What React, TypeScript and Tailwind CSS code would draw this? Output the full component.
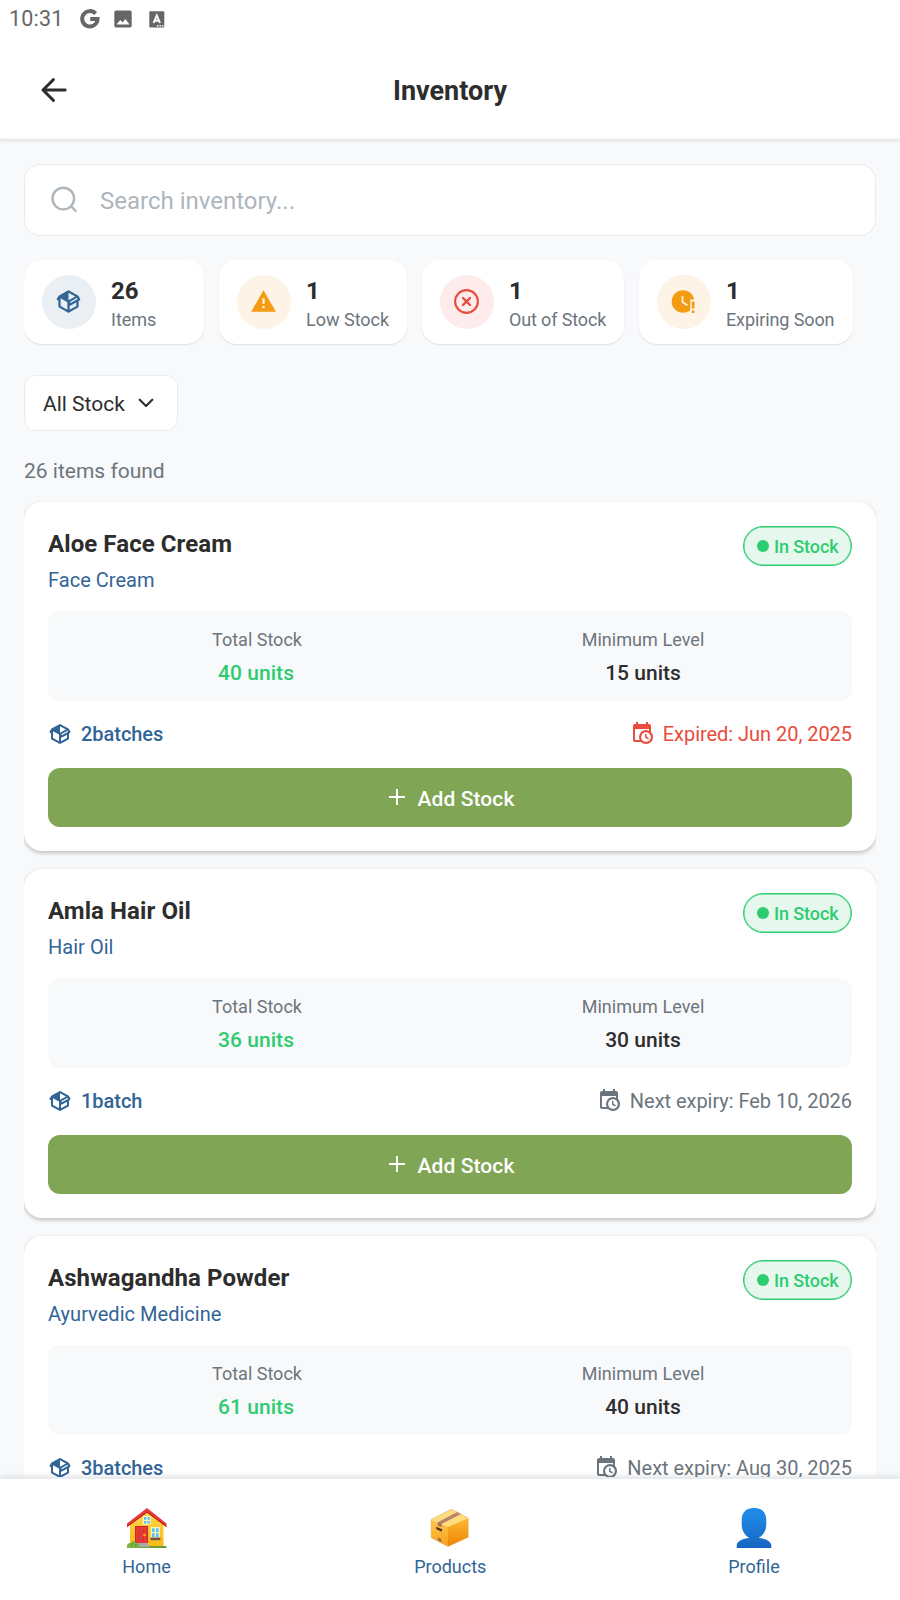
import type { ReactNode } from "react";

function Mdi({ d, className }: { d: string; className: string }) {
  return (
    <svg viewBox="0 0 24 24" fill="currentColor" fillRule="evenodd" className={className}>
      <path d={d} />
    </svg>
  );
}

const PACKAGE =
  "M2,10.96C1.5,10.68 1.35,10.07 1.63,9.59L3.13,7C3.24,6.8 3.41,6.66 3.6,6.58L11.43,2.18C11.59,2.06 11.79,2 12,2C12.21,2 12.41,2.06 12.57,2.18L20.47,6.62C20.66,6.72 20.82,6.88 20.91,7.08L22.36,9.6C22.64,10.08 22.47,10.69 22,10.96L21,11.54V16.5C21,16.88 20.79,17.21 20.47,17.38L12.57,21.82C12.41,21.94 12.21,22 12,22C11.79,22 11.59,21.94 11.43,21.82L3.53,17.38C3.21,17.21 3,16.88 3,16.5V10.96C2.7,11.13 2.32,11.14 2,10.96M12,4.15V10.85L17.96,7.5L12,4.15M5,15.91L11,19.29V12.58L5,9.21V15.91M19,15.91V12.69L14,15.59C13.67,15.77 13.3,15.76 13,15.6V19.29L19,15.91M13.85,13.36L20.13,9.73L19.55,8.72L13.27,12.35L13.85,13.36";
const ALERT = "M13 14H11V9H13M13 18H11V16H13M1 21H23L12 2L1 21Z";
const CALENDAR =
  "M15,13H16.5V15.82L18.94,17.23L18.19,18.53L15,16.69V13M19,8H5V19H9.67C9.24,18.09 9,17.07 9,16A7,7 0 0,1 16,9C17.07,9 18.09,9.24 19,9.67V8M5,21C3.89,21 3,20.1 3,19V5C3,3.89 3.89,3 5,3H6V1H8V3H16V1H18V3H19A2,2 0 0,1 21,5V11.1C22.24,12.36 23,14.09 23,16A7,7 0 0,1 16,23C14.09,23 12.36,22.24 11.1,21H5M16,11.15A4.85,4.85 0 0,0 11.15,16C11.15,18.68 13.32,20.85 16,20.85A4.85,4.85 0 0,0 20.85,16C20.85,13.32 18.68,11.15 16,11.15Z";

function StatusBar() {
  return (
    <div className="flex h-[38px] items-center pl-[9px] text-[#666666]">
      <span className="w-[71px] text-[21.5px] tracking-[0.2px]">10:31</span>
      <svg viewBox="0 0 20 20" className="size-5 shrink-0" fill="none" stroke="currentColor" strokeWidth="3.9">
        <path d="M15.6 4.6A7.7 7.7 0 1 0 17.6 10H10.2" />
      </svg>
      <svg viewBox="0 0 18 18" className="ml-[14px] h-[18px] w-[18px] shrink-0" fill="currentColor" fillRule="evenodd">
        <path d="M2 0.5H16A1.7 1.7 0 0 1 17.7 2.2V15.8A1.7 1.7 0 0 1 16 17.5H2A1.7 1.7 0 0 1 .3 15.8V2.2A1.7 1.7 0 0 1 2 .5ZM2.5 14.5H15.5L11.4 9L8.6 12.6L6.3 10Z" />
      </svg>
      <svg viewBox="0 0 16 17" className="ml-[16.5px] h-[17px] w-4 shrink-0">
        <rect x="0.3" y="0.3" width="15" height="16.2" rx="1" fill="currentColor" />
        <path d="M4.6 12L7.8 4.4L11 12M5.8 9.8H9.8" stroke="white" strokeWidth="1.9" fill="none" />
        <path d="M8 14.7H9.5M10.5 14.7H12M13 14.7H14.4" stroke="white" strokeWidth="1.4" />
      </svg>
    </div>
  );
}

function Header() {
  return (
    <header className="relative z-10 h-[140px] shrink-0 border-b-2 border-[#eff1f3] bg-white shadow-[0_1px_2px_rgba(0,0,0,0.12)]">
      <StatusBar />
      <div className="grid h-[100px] grid-cols-[100px_1fr_100px] items-center pt-[4px]">
        <svg viewBox="0 0 26 24" className="ml-[41px] h-6 w-[26px]" fill="none" stroke="#2d2d2d" strokeWidth="2.9" strokeLinecap="round" strokeLinejoin="round">
          <path d="M12.4 1.6L2 12L12.4 22.4M2.5 12H24.2" />
        </svg>
        <h1 className="pt-[2px] text-center text-[27px] font-bold leading-none text-[#2d2d2d]">Inventory</h1>
      </div>
    </header>
  );
}

function Stat({ value, label, tint, size, children }: { value: string; label: string; tint: string; size: string; children: ReactNode }) {
  return (
    <div className={`flex h-[84px] shrink-0 items-center gap-[15px] rounded-[18px] bg-white pl-[18px] shadow-[0_1px_1.5px_rgba(0,0,0,0.1)] ${size}`}>
      <div className={`flex size-[54px] shrink-0 items-center justify-center rounded-full pr-px pb-px ${tint}`}>{children}</div>
      <div className="pt-[7px]">
        <div className="text-[24px] font-bold leading-[29px] text-[#2d2d2d]">{value}</div>
        <div className="whitespace-nowrap text-[18px] leading-[28px] text-[#6c757d]">{label}</div>
      </div>
    </div>
  );
}

interface Product {
  name: string;
  category: string;
  total: string;
  minimum: string;
  batches: string;
  expiry: string;
  expired?: boolean;
}

const products: Product[] = [
  { name: "Aloe Face Cream", category: "Face Cream", total: "40 units", minimum: "15 units", batches: "2batches", expiry: "Expired: Jun 20, 2025", expired: true },
  { name: "Amla Hair Oil", category: "Hair Oil", total: "36 units", minimum: "30 units", batches: "1batch", expiry: "Next expiry: Feb 10, 2026" },
  { name: "Ashwagandha Powder", category: "Ayurvedic Medicine", total: "61 units", minimum: "40 units", batches: "3batches", expiry: "Next expiry: Aug 30, 2025" },
];

function ProductCard({ p }: { p: Product }) {
  return (
    <article className="h-[349px] shrink-0 rounded-[18px] bg-white px-6 pt-6 shadow-[0_2px_4px_rgba(0,0,0,0.24)]">
      <div className="flex h-[85px] items-start justify-between">
        <div>
          <h2 className="text-[24px] font-bold leading-[36px] tracking-[0.08px] text-[#2d2d2d]">{p.name}</h2>
          <p className="text-[20px] leading-[36px] tracking-[0.03px] text-[#326496]">{p.category}</p>
        </div>
        <div className="flex h-10 w-[109px] items-center gap-[5px] rounded-[20px] border border-[#2ecc71] bg-[#e6f8ed] pl-[13px] text-[18px] font-medium tracking-[-0.1px] text-[#2ecc71] shadow-[inset_0_0_0_0.5px_#2ecc71]">
          <span className="size-3 shrink-0 rounded-full bg-[#2ecc71]" />
          <span className="whitespace-nowrap">In Stock</span>
        </div>
      </div>
      <div className="grid h-[90px] grid-cols-2 rounded-[12px] bg-[#f8f9fb] px-[16px] pt-[12px] text-center">
        <div>
          <div className="text-[18px] leading-[33px] text-[#6c757d]">Total Stock</div>
          <div className="pt-px pr-[2px] text-[21px] font-medium leading-[33px] tracking-[0.05px] text-[#2ecc71]">{p.total}</div>
        </div>
        <div>
          <div className="text-[18px] leading-[33px] tracking-[0.05px] text-[#6c757d]">Minimum Level</div>
          <div className="pt-px text-[21px] font-medium leading-[33px] text-[#2d2d2d]">{p.minimum}</div>
        </div>
      </div>
      <div className="flex h-[67px] items-center justify-between pb-[2px] text-[20px]">
        <div className="flex items-center gap-[9px] font-medium text-[#326496]">
          <Mdi d={PACKAGE} className="size-6" />
          <span className="tracking-[-0.04px]">{p.batches}</span>
        </div>
        <div className={`flex items-center gap-[9px] ${p.expired ? "text-[#e74c3c]" : "text-[#6c757d]"}`}>
          <Mdi d={CALENDAR} className="mb-px size-6" />
          <span className="tracking-[-0.04px]">{p.expiry}</span>
        </div>
      </div>
      <button className="flex h-[59px] w-full items-center justify-center gap-[8px] rounded-[12px] bg-[#80a554] text-[21px] font-medium text-white">
        <Mdi d="M20 13H13V20H11V13H4V11H11V4H13V11H20Z" className="mb-[2px] size-6" />
        <span className="pt-[4px] tracking-[0.1px]">Add Stock</span>
      </button>
    </article>
  );
}

function HomeIcon() {
  return (
    <svg viewBox="0 0 42 42" className="size-[42px]">
      <defs>
        <linearGradient id="wall" x2="0" y2="1">
          <stop stopColor="#ffd84a" />
          <stop offset="1" stopColor="#fbb916" />
        </linearGradient>
      </defs>
      <path d="M4 17L21 3L37.5 17V40H4Z" fill="url(#wall)" />
      <path d="M1 39H40.5V41H1Z" fill="#689f38" />
      <path d="M21 1L1 16.5V20.2L21 5.4L40.5 20.2V16.5Z" fill="#e53935" />
      <path d="M1.2 19.5L21 5.2L40.3 19.5" stroke="#b71c1c" strokeWidth="1" fill="none" />
      <rect x="16.8" y="9" width="8" height="8.5" fill="#fff3c4" />
      <path d="M18 10H20.3V12.7H18ZM21.5 10H23.8V12.7H21.5ZM18 14H20.3V16.5H18ZM21.5 14H23.8V16.5H21.5Z" fill="#4fc3f7" />
      <rect x="9" y="19" width="13" height="17" fill="#c62828" />
      <rect x="10" y="20" width="11" height="16" fill="#e53935" />
      <path d="M13 22V34M17.5 22V34" stroke="#d32f2f" strokeWidth=".8" />
      <circle cx="18.5" cy="28" r="1.3" fill="#ffb300" />
      <path d="M9 36H21L24 40H9Z" fill="#aaa" />
      <rect x="24.8" y="20" width="9" height="11" fill="#fff3c4" />
      <path d="M26 21.2H28.6V25H26ZM30 21.2H32.6V25H30ZM26 26.2H28.6V30H26ZM30 26.2H32.6V30H30Z" fill="#4fc3f7" />
      <rect x="24.5" y="30.5" width="9.8" height="2.7" fill="#795548" />
      <path d="M1 40.5C.3 37 3 35.8 5 36C5.5 33.5 9.5 33.7 10 36C13 36 14 38.5 13 41H1Z" fill="#7cb342" />
      <path d="M5 38L7 36.5M9 38.5L11 37.5" stroke="#558b2f" />
    </svg>
  );
}

function BoxIcon() {
  return (
    <svg viewBox="0 0 42 42" className="size-[42px]">
      <defs>
        <linearGradient id="boxside" x2="0" y2="1">
          <stop stopColor="#fdb934" />
          <stop offset="1" stopColor="#ef8400" />
        </linearGradient>
        <linearGradient id="boxfront" x2="0" y2="1">
          <stop stopColor="#ffc74b" />
          <stop offset="1" stopColor="#f9a01e" />
        </linearGradient>
      </defs>
      <path d="M2.2 12.4L19 19.3V39.5L2.2 30.7Z" fill="url(#boxfront)" />
      <path d="M19 19.3L39.2 11V30.2L19 39.5Z" fill="url(#boxside)" />
      <path d="M2.2 12.4L22.6 2.2L39.2 11L19 20Z" fill="#ffdc7c" />
      <path d="M8.8 15.2L28.3 5.1L32 7.1L12.5 16.9V20L8.8 18.3Z" fill="#b9836c" />
      <path d="M8.8 15.4L12.5 17V20L8.8 18.3Z" fill="#a1745a" />
      <path d="M7.3 19.8L13 22.2V24.8L7.3 22.3Z" fill="#50342b" />
      <path d="M8.8 30.2L12.3 31.9V35.3L8.8 33.5Z" fill="#a57346" />
      <path d="M2.2 12.4L22.6 2.2L39.2 11V30.2L19 39.5L2.2 30.7Z" stroke="#d9a050" strokeWidth=".5" fill="none" />
    </svg>
  );
}

function ProfileIcon() {
  return (
    <svg viewBox="0 0 42 42" className="size-[42px]">
      <defs>
        <linearGradient id="person" x2="0" y2="1">
          <stop offset=".2" stopColor="#1e88e5" />
          <stop offset="1" stopColor="#1565c0" />
        </linearGradient>
      </defs>
      <path d="M21 1C29 1 33.3 5.3 33.3 13.5V17.5C33.3 23.7 30 28.6 25.6 31C32.7 31.6 38.3 34.4 38.3 38.5V41H3.7V38.5C3.7 34.4 9.3 31.6 16.4 31C12 28.6 8.7 23.7 8.7 17.5V13.5C8.7 5.3 13 1 21 1Z" fill="url(#person)" />
    </svg>
  );
}

function Tab({ label, children }: { label: string; children: ReactNode }) {
  return (
    <div className="flex w-24 flex-col items-center pt-[28px] text-[18px] leading-[22px] text-[#326496]">
      {children}
      <span className="mt-[7px]">{label}</span>
    </div>
  );
}

export default function App() {
  return (
    <div className="flex h-[1600px] w-[900px] flex-col overflow-hidden bg-[#f8f9fb] font-[Roboto,sans-serif] antialiased">
      <Header />
      <main className="flex min-h-0 flex-1 flex-col overflow-hidden px-6 pt-6">
        <div className="flex h-[72px] shrink-0 items-center rounded-[16px] border-[1.5px] border-[#e9ecef] bg-white pl-[26px]">
          <svg viewBox="0 0 28 28" className="size-7 shrink-0" fill="none" stroke="#adb5bd" strokeWidth="2.4" strokeLinecap="round">
            <circle cx="12.3" cy="12.6" r="10.8" />
            <path d="M20.1 20.4L24.7 25" />
          </svg>
          <span className="ml-[21px] pt-[2px] text-[24px] text-[#adb5bd]">Search inventory...</span>
        </div>
        <div className="mt-[23.5px] mb-[-3.5px] flex shrink-0 gap-[15px] overflow-x-clip pb-1">
          <Stat value="26" label="Items" tint="bg-[#eaeff4]" size="w-[180px]">
            <Mdi d={PACKAGE} className="size-[27px] text-[#326496]" />
          </Stat>
          <Stat value="1" label="Low Stock" tint="bg-[#fef3e7]" size="w-[188px]">
            <Mdi d={ALERT} className="size-[27px] text-[#f39c12]" />
          </Stat>
          <Stat value="1" label="Out of Stock" tint="bg-[#fdeceb]" size="w-[202px] tracking-[-0.14px]">
            <svg viewBox="0 0 27 27" className="size-[27px]" fill="none" stroke="#e74c3c" strokeWidth="2.1" strokeLinecap="round">
              <circle cx="13.5" cy="13.5" r="11.4" />
              <path d="M10 10L17 17M17 10L10 17" strokeWidth="2.4" />
            </svg>
          </Stat>
          <Stat value="1" label="Expiring Soon" tint="bg-[#fef3e7]" size="w-[213.5px] tracking-[-0.11px]">
            <svg viewBox="0 0 27 27" className="size-[27px]">
              <circle cx="13" cy="13.5" r="11.3" fill="#f39c12" />
              <path d="M12.5 8V14.3L17.5 17.3" stroke="#fef3e7" strokeWidth="1.7" fill="none" />
              <path d="M20.3 11.5H26V27H20.3Z" fill="#fef3e7" />
              <path d="M21.8 13.5H24.5V20.5H21.8ZM21.8 22.5H24.5V25H21.8Z" fill="#f39c12" />
            </svg>
          </Stat>
        </div>
        <div className="mt-[31px] flex h-[56px] w-[154px] shrink-0 items-center gap-[13px] rounded-[12px] border-[1.5px] border-[#e9ecef] bg-white pl-[18px] text-[21px] text-[#2d2d2d]">
          <span className="pt-[3px]">All Stock</span>
          <svg viewBox="0 0 16 10" className="h-[10px] w-4" fill="none" stroke="currentColor" strokeWidth="2.1" strokeLinecap="round" strokeLinejoin="round">
            <path d="M1.7 1.7L8 8L14.3 1.7" />
          </svg>
        </div>
        <p className="mt-[25px] mb-[16px] h-[30px] shrink-0 text-[21px] leading-[30px] text-[#6c757d]">26 items found</p>
        <div className="flex flex-col gap-[18px] overflow-x-clip">
          {products.map((p) => (
            <ProductCard key={p.name} p={p} />
          ))}
        </div>
      </main>
      <nav className="relative z-10 flex h-[123px] shrink-0 justify-between border-t-2 border-[#e9ecef] bg-white pr-[98px] pl-[98.5px] shadow-[0_-1px_5px_rgba(0,0,0,0.1)]">
        <Tab label="Home"><HomeIcon /></Tab>
        <Tab label="Products"><BoxIcon /></Tab>
        <Tab label="Profile"><ProfileIcon /></Tab>
      </nav>
    </div>
  );
}
